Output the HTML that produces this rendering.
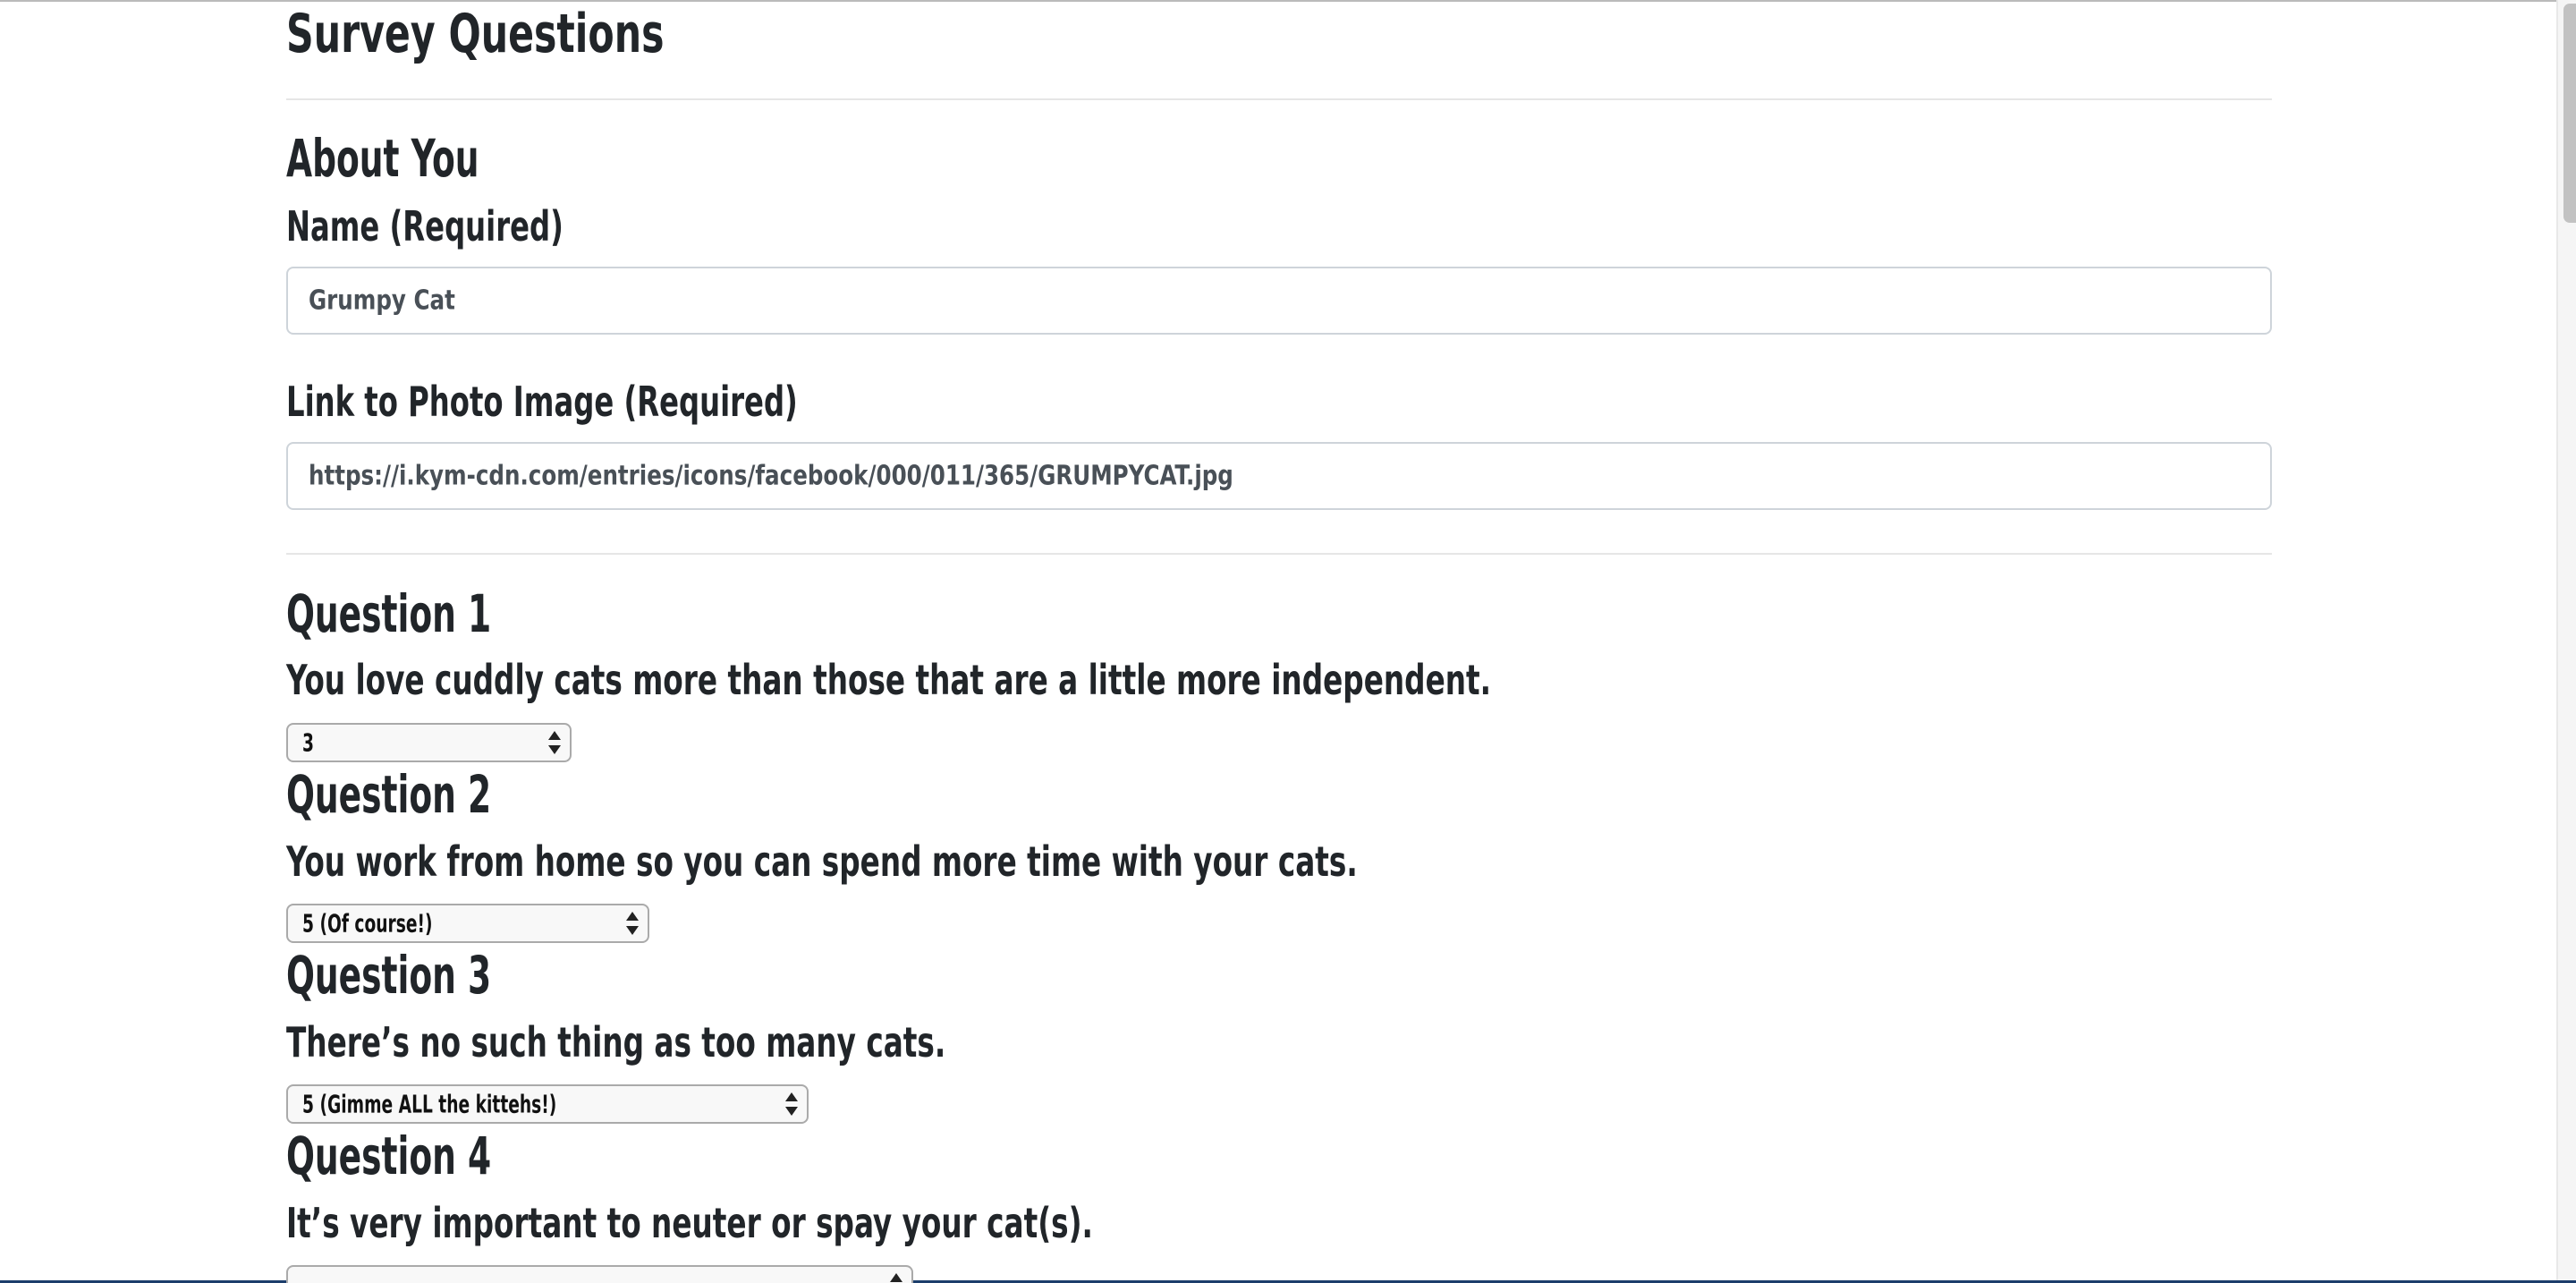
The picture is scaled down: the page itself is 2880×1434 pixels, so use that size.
<!DOCTYPE html>
<html><head><meta charset="utf-8"><style>
html,body{margin:0;padding:0;width:2880px;height:1434px;overflow:hidden;background:#fff;}
body{position:relative;font-family:"DejaVu Sans Condensed","DejaVu Sans",sans-serif;font-weight:bold;color:#212529;}
.t{position:absolute;left:320px;white-space:nowrap;line-height:1;transform-origin:left center;}
.h1{font-size:60px;transform:scaleX(0.79);}
.h2{font-size:58px;transform:scaleX(0.72);}
.lb{font-size:46px;transform:scaleX(0.78);}
.q{font-size:46px;transform:scaleX(0.79);}
.hr{position:absolute;left:320px;width:2220px;height:2px;background:#e6e6e6;}
.inp{position:absolute;left:320px;width:2216px;border:2px solid #ced4da;border-radius:8px;background:#fff;box-sizing:content-box;}
.inp span{position:absolute;left:23px;top:50%;transform:translateY(-50%) scaleX(0.91);transform-origin:left center;font-size:30px;color:#495057;white-space:nowrap;}
.sel{position:absolute;left:320px;height:40px;border:2px solid #aaa;border-radius:8px;background:#f8f8f8;}
.sel span{position:absolute;left:16px;top:50%;transform:translateY(-50%) scaleX(0.74);transform-origin:left center;font-size:28px;color:#111;white-space:nowrap;}
.sel i{position:absolute;right:10px;top:7px;width:0;height:0;border-left:7px solid transparent;border-right:7px solid transparent;border-bottom:10px solid #222;}
.sel b{position:absolute;right:10px;bottom:7px;width:0;height:0;border-left:7px solid transparent;border-right:7px solid transparent;border-top:10px solid #222;}
</style></head><body>
<div style="position:absolute;left:0;top:0;width:2858px;height:2px;background:#bbb"></div>
<div style="position:absolute;left:2858px;top:0;width:22px;height:1434px;background:#f5f5f5;border-left:2px solid #e8e8e8"></div>
<div style="position:absolute;left:2866px;top:4px;width:14px;height:245px;background:#c2c2c2;border-radius:7px 0 0 7px"></div>
<div style="position:absolute;left:0;top:1431px;width:2880px;height:3px;background:#1c3d6b"></div>

<div class="t h1" style="top:8px">Survey Questions</div>
<div class="hr" style="top:110px"></div>
<div class="t h2" style="top:148px">About You</div>
<div class="t lb" style="top:230px">Name (Required)</div>
<div class="inp" style="top:298px;height:72px"><span>Grumpy Cat</span></div>
<div class="t lb" style="top:426px">Link to Photo Image (Required)</div>
<div class="inp" style="top:494px;height:72px"><span>https://i.kym-cdn.com/entries/icons/facebook/000/011/365/GRUMPYCAT.jpg</span></div>
<div class="hr" style="top:618px"></div>

<div class="t h2" style="top:657px">Question 1</div>
<div class="t q" style="top:737px">You love cuddly cats more than those that are a little more independent.</div>
<div class="sel" style="top:808px;width:315px"><span>3</span><i></i><b></b></div>

<div class="t h2" style="top:859px">Question 2</div>
<div class="t q" style="top:940px">You work from home so you can spend more time with your cats.</div>
<div class="sel" style="top:1010px;width:402px"><span>5 (Of course!)</span><i></i><b></b></div>

<div class="t h2" style="top:1061px">Question 3</div>
<div class="t q" style="top:1142px">There’s no such thing as too many cats.</div>
<div class="sel" style="top:1212px;width:580px"><span>5 (Gimme ALL the kittehs!)</span><i></i><b></b></div>

<div class="t h2" style="top:1263px">Question 4</div>
<div class="t q" style="top:1344px">It’s very important to neuter or spay your cat(s).</div>
<div class="sel" style="top:1414px;width:697px"><i></i></div>
</body></html>
